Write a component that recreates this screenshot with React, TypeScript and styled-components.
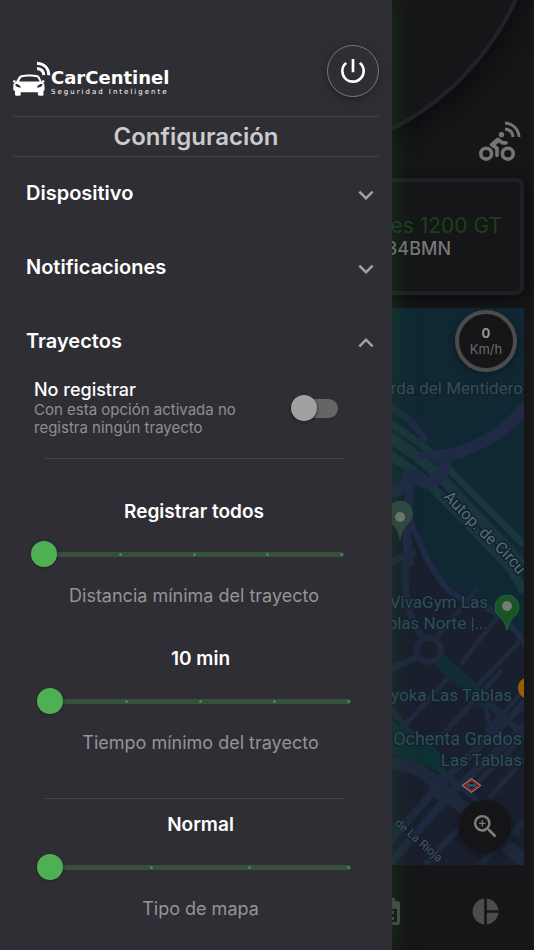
import React, { useState } from "react";
import styled, { createGlobalStyle } from "styled-components";
import { MdExpandLess, MdExpandMore, MdPieChart, MdPowerSettingsNew, MdZoomIn } from "react-icons/md";
import { FaBiking } from "react-icons/fa";

const GlobalStyle = createGlobalStyle`
  * { box-sizing: border-box; }
  body { margin: 0; background: #161618; font-family: Inter, Roboto, sans-serif; }
  button { font: inherit; color: inherit; background: none; border: 0; padding: 0; cursor: pointer; }
  h1, h2, h3, p { margin: 0; }
`;

const Shell = styled.div`
  position: relative;
  min-height: 100vh;
  overflow: hidden;
  background: #161618;
`;

/* ---------- dashboard behind the drawer ---------- */

const Dashboard = styled.main`
  display: flex;
  flex-direction: column;
  min-height: 100vh;
`;

const GaugeArea = styled.header`
  position: relative;
  height: 178px;
  overflow: hidden;
`;

const Gauge = styled.div`
  position: absolute;
  left: 50%;
  bottom: 17px;
  width: 552px;
  height: 552px;
  transform: translateX(-50%);
  border: 4px solid #212127;
  border-radius: 50%;
  box-shadow: 4px 6px 24px #0c0c0e;
`;

const Tracker = styled.div`
  position: absolute;
  right: 12px;
  bottom: 17px;
  display: flex;
  color: #757575;
`;

const VehicleCard = styled.section`
  display: flex;
  flex-direction: column;
  justify-content: center;
  align-items: flex-end;
  height: 117px;
  margin: 0 10px 13px;
  padding-right: 18px;
  border: 4px solid #202024;
  border-radius: 8px;
  box-shadow: 2px 4px 16px #0c0c0e;
`;

const VehicleName = styled.h2`
  font-size: 21px;
  line-height: 24px;
  font-weight: 400;
  color: #19411c;
`;

const Plate = styled.p`
  padding-right: 51px;
  font-size: 18px;
  line-height: 22px;
  font-weight: 500;
  color: #777777;
`;

const MapPanel = styled.section`
  position: relative;
  height: 557px;
  margin: 0 10px;
  overflow: hidden;
  background: #102934;
`;

const MapDrawing = styled.svg`
  display: block;
  width: 100%;
  height: 100%;
`;

const Speed = styled.div`
  position: absolute;
  top: 2px;
  right: 7px;
  width: 62px;
  height: 62px;
  display: flex;
  flex-direction: column;
  align-items: center;
  justify-content: center;
  border: 4px solid #4c4c4c;
  border-radius: 50%;
  background: #161618;
  color: #6a6a6a;
  font-size: 13px;
  line-height: 16px;
  box-shadow: 0 2px 10px #0b1a22;

  strong { color: #999999; font-weight: 700; }
`;

const ZoomButton = styled.button`
  position: absolute;
  right: 13px;
  bottom: 13px;
  width: 52px;
  height: 52px;
  display: grid;
  place-items: center;
  border-radius: 50%;
  background: #151517;
  color: #7c7c7c;
  box-shadow: 0 2px 8px #10121a;
`;

const BottomNav = styled.nav`
  flex: 1;
  display: flex;
  justify-content: flex-end;
  align-items: center;
  gap: 67px;
  min-height: 85px;
  padding: 8px 33px 0;
  color: #4c4c4c;
`;

const NavButton = styled.button`
  display: flex;
`;

/* ---------- drawer ---------- */

const Drawer = styled.aside`
  position: absolute;
  inset: 0 auto 0 0;
  width: min(392px, 85%);
  padding: 45px 13px 0;
  overflow: hidden auto;
  scrollbar-width: none;
  background: #2f2e34;
  color: #ffffff;
  box-shadow: 0 0 24px rgba(32, 80, 32, 0.45);
`;

const DrawerHeader = styled.header`
  display: flex;
  justify-content: space-between;
  align-items: center;
  margin-bottom: 19px;
`;

const Brand = styled.div`
  display: flex;
  align-items: flex-end;
  padding-top: 15px;
`;

const BrandText = styled.div`
  display: flex;
  flex-direction: column;
  white-space: nowrap;
  font-family: "DejaVu Sans", sans-serif;
  font-size: 18px;
  line-height: 18px;
  font-weight: 700;
`;

const Tagline = styled.small`
  font-size: 7px;
  line-height: 10px;
  font-weight: 400;
  letter-spacing: 2px;
`;

const PowerButton = styled.button`
  flex: none;
  width: 52px;
  height: 52px;
  display: grid;
  place-items: center;
  border: 1px solid #77777a;
  border-radius: 50%;
  box-shadow: 0 2px 8px #202024;
`;

const DrawerTitle = styled.h1`
  border: solid #46464b;
  border-width: 1px 0;
  font-size: 24px;
  line-height: 39px;
  font-weight: 600;
  text-align: center;
  color: #cbcbcb;
`;

const Sections = styled.div`
  margin-top: -1px;
`;

const SectionButton = styled.button`
  display: flex;
  justify-content: space-between;
  align-items: center;
  width: 100%;
  height: 74px;
  padding: 0 0 0 13px;
  font-size: 20px;
  font-weight: 600;

  svg { color: #a2a2a4; margin: 3px -2px 0 0; }
`;

const SwitchRow = styled.label`
  display: flex;
  align-items: center;
  justify-content: space-between;
  padding: 1px 41px 0 21px;
`;

const SwitchText = styled.span`
  display: block;
  max-width: 224px;
  font-size: 15px;
  line-height: 18px;
  color: #8f8f92;
`;

const SwitchTitle = styled.span`
  display: block;
  font-size: 18px;
  line-height: 22px;
  font-weight: 500;
  color: #ffffff;
`;

const Switch = styled.input`
  appearance: none;
  display: flex;
  align-items: center;
  width: 43px;
  height: 19px;
  margin: 0;
  border-radius: 10px;
  background: #656567;
  cursor: pointer;

  &::before {
    content: "";
    width: 26px;
    height: 26px;
    margin-left: -4px;
    border-radius: 50%;
    background: #a0a0a0;
    box-shadow: 0 1px 3px #1c1c20;
  }
  &:checked { background: #37593b; justify-content: flex-end; }
  &:checked::before { background: #4caf50; }
`;

const Divider = styled.hr<{ $top: number; $bottom: number }>`
  height: 1px;
  border: 0;
  background: #46464b;
  margin: ${(p) => p.$top}px 36px ${(p) => p.$bottom}px 32px;
`;

const SliderBlock = styled.section<{ $shifted?: boolean }>`
  padding: ${(p) => (p.$shifted ? "0 28px 0 24px" : "0 35px 0 18px")};
  text-align: center;
`;

const SliderValue = styled.output`
  display: block;
  padding-left: 13px;
  font-size: 19px;
  line-height: 24px;
  font-weight: 600;
`;

const SliderLabel = styled.label`
  display: block;
  padding-left: 13px;
  font-size: 18px;
  line-height: 24px;
  color: #949496;
`;

const SliderControl = styled.div`
  display: grid;
  align-items: center;
  height: 60px;

  > * { grid-area: 1 / 1; }
`;

const Track = styled.div`
  display: flex;
  justify-content: space-between;
  align-items: center;
  height: 5px;
  margin-left: 13px;
  padding: 0 1px;
  border-radius: 3px;
  background: #374f3c;
`;

const Tick = styled.i`
  width: 3px;
  height: 3px;
  border-radius: 50%;
  background: #438f48;
`;

const Range = styled.input`
  appearance: none;
  width: 100%;
  height: 26px;
  margin: 0;
  background: none;
  cursor: pointer;

  &::-webkit-slider-thumb {
    appearance: none;
    width: 26px;
    height: 26px;
    border-radius: 50%;
    background: #4eb052;
    box-shadow: 0 1px 3px #222226;
  }
`;

const Spacer = styled.div`
  height: 39px;
`;

type StepSliderProps = { id: string; label: string; values: string[]; shifted?: boolean };

function StepSlider({ id, label, values, shifted }: StepSliderProps) {
  const [step, setStep] = useState(0);
  return (
    <SliderBlock $shifted={shifted}>
      <SliderValue htmlFor={id}>{values[step]}</SliderValue>
      <SliderControl>
        <Track>{values.map((v) => <Tick key={v} />)}</Track>
        <Range id={id} type="range" min={0} max={values.length - 1} value={step}
          onChange={(e) => setStep(Number(e.target.value))} />
      </SliderControl>
      <SliderLabel htmlFor={id}>{label}</SliderLabel>
    </SliderBlock>
  );
}

function CarLogo() {
  return (
    <svg width="38" height="36" viewBox="0 0 38 36" aria-hidden="true">
      <path fill="#fff" fillRule="evenodd" d="M8.5 14.2c4-1.1 12-1.1 16 0 1.300.4 2 1.600 2.600 2.900l1.500 3.300c1.900.8 2.900 2.400 2.900 4.600v3.600c0 .7-.3 1.200-1 1.400v3.600c0 .8-.4 1.200-1.200 1.200h-3.200c-.8 0-1.200-.4-1.200-1.200v-2.400H7.700v2.400c0 .8-.4 1.200-1.200 1.200H3.200c-.8 0-1.200-.4-1.200-1.200V30c-1-.3-1.700-.9-1.700-1.800V25c0-2.200 1-3.800 2.900-4.600l2.100-3.700c.8-1.400 1.900-2.200 3.200-2.500zM6.200 20.500h20.500l-2.300-4.300c-4.300-1-11.700-1-15.600 0-1.200.9-1.900 2.400-2.600 4.300zM2.400 23c0 2 1.500 3.400 5.400 3.600C8 24.700 5.300 22.800 2.400 23zm27 0c-3-.2-5.500 1.700-5.400 3.600 4-.2 5.400-1.600 5.400-3.600zM0 20.500c0-1 .8-1.300 2-1.200l1 1-2 1.200c-.6 0-1-.4-1-1zm31.500 0c0-1-.8-1.300-2-1.200l-1 1 2 1.200c.6 0 1-.4 1-1z" />
      <path fill="none" stroke="#fff" strokeWidth="3" d="M24 2.300c7.500.4 11.600 5.200 11.900 12M24 7.600c4.200.3 6.500 2.800 6.800 6.600" />
    </svg>
  );
}

function BikeTracker() {
  return (
    <svg width="43" height="40" viewBox="0 0 43 40" role="img" aria-label="Moto conectada">
      <FaBiking x="0" y="11" size={36} style={{ height: 29 }} />
      <path fill="none" stroke="#757575" strokeWidth="3" d="M26 2c8 .5 13.500 6 14 14M26 8c5 .5 7.500 3 8 8" />
    </svg>
  );
}

function CalendarIcon() {
  return (
    <svg width="31" height="31" viewBox="0 0 31 31" aria-hidden="true">
      <path fill="currentColor" fillRule="evenodd" d="M6 2h3v3h11V2h3v3h2q3 0 3 3v18q0 3-3 3H5q-3 0-3-3V8q0-3 3-3h1zM5 13v13h20V13zM8 15h14v3H8zM8 21h14v3H8z" />
    </svg>
  );
}

const label = { fontFamily: "Roboto, sans-serif", fontSize: 17, textAnchor: "end" as const,
  fill: "#304e57", stroke: "#14202f", strokeWidth: 3, paintOrder: "stroke" as const };

function CityMap() {
  return (
    <MapDrawing viewBox="10 308 514 557" preserveAspectRatio="xMaxYMin slice" role="img" aria-label="Mapa">
      <path fill="#102833" d="M10 308h514v557H10z" />
      {/* city blocks */}
      <path fill="#1a1f2e" d="M380 500l26-4 20 56 21 34 34 15 31 26 12 14v224H380z" />
      {/* motorway lanes */}
      <g fill="none" stroke="#1b353d">
        <path strokeWidth="7" d="M380 417q34 20 62 45l82 83" />
        <path strokeWidth="11" d="M380 431q38 23 66 51l78 83" />
        <path strokeWidth="9" d="M380 449q34 20 56 42l64 66q14 14 24 35" />
      </g>
      <path fill="none" stroke="#172d35" strokeWidth="2" d="M380 424q38 23 66 51l78 83" />
      {/* link roads */}
      <g fill="none" stroke="#202a44" strokeLinecap="round">
        <path strokeWidth="12" d="M528 404q-24 30-56 43-20 10-37 9" />
        <path strokeWidth="7" d="M446 465q-6-14-24-9M386 405q27 14 38 34" />
        <path strokeWidth="12" d="M446 459q-1 22-20 24-10-4-18-8" />
        <path strokeWidth="13" d="M386 494q18-5 27-18" />
        <path strokeWidth="9" d="M410 480q0 20-4 40l3 42" />
        <path strokeWidth="6" d="M410 520l16 37q15 27 25 35 17 12 32 14 30 15 43 40" />
      </g>
      <g fill="none" stroke="#1f293e">
        <path strokeWidth="7" d="M384 565l32-13M406 555q-4 40 8 68l12 21M384 672l38-17M436 652l92 88" />
        <path strokeWidth="5" d="M434 640l44-52M461 664l42-54M475 688l46-48M404 726l46-50M438 740l64-70M384 700l20 25 26 28M440 770l80 65" />
        <path strokeWidth="5" d="M528 686l-42 46M528 732l-56 56M486 704q0 20 12 38M528 755l-40 44" />
        <path strokeWidth="13" d="M384 763q32-2 53 22l32 28 60 52" />
        <path strokeWidth="8" d="M528 700l-86 82-92 104M540 712l-92 84-70 82" />
        <path strokeWidth="6" d="M425 865l50-54M480 865l44-44" />
        <circle cx="429" cy="650" r="12" strokeWidth="6" />
        <circle cx="443" cy="787" r="11" strokeWidth="6" />
      </g>
      <circle cx="429" cy="650" r="9" fill="#1a1f2e" />
      {/* parks */}
      <path fill="#102c36" d="M443 654l49 43-9 12-48-44z" />
      <path fill="#0f3032" d="M380 710q29 25 50 31l19 25-9 8q-22-16-60-22z" />
      <path fill="#0f3032" d="M380 817l18 8-6 15-12 8z" />

      <text x="523" y="394" {...label}>rda del Mentidero</text>
      <path id="motorway" fill="none" d="M443 497q35 38 60 60l36 42" />
      <text {...label} textAnchor="start" fontSize={16} fill="#52706f"><textPath href="#motorway">Autop. de Circu</textPath></text>
      <text x="488" y="608" {...label}>VivaGym Las</text>
      <text x="488" y="629" {...label}>blas Norte |...</text>
      <text x="512" y="701" {...label}>yoka Las Tablas</text>
      <text x="522" y="745" {...label} fontSize={18}>Ochenta Grados</text>
      <text x="522" y="766" {...label}>Las Tablas</text>
      <text transform="translate(394 824) rotate(41)" {...label} textAnchor="start" fontSize={12} fill="#455062">de La Rioja</text>

      {/* place markers */}
      <path fill="#314943" d="M400 541q-2-12-8-17a13 13 0 1 1 16 0q-6 5-8 17z" />
      <circle cx="400" cy="517" r="5" fill="#777b75" />
      <path fill="#185426" stroke="#1d6930" d="M507 630q-2-10-9-15a12 12 0 1 1 18 0q-7 5-9 15z" />
      <circle cx="507" cy="606" r="5" fill="#747c76" />
      <circle cx="529" cy="688" r="11" fill="#965e08" />
      <path fill="#8b8989" d="M471.500 778l10 7.500-10 7.500-10-7.500z" />
      <path fill="#171f2c" stroke="#8d2423" strokeWidth="2" d="M471.500 780.500l7 5-7 5-7-5z" />
      <path fill="#18556a" d="M467 784h9v3h-9z" />
    </MapDrawing>
  );
}

export default function App() {
  const [open, setOpen] = useState("Trayectos");
  return (
    <Shell>
      <GlobalStyle />
      <Dashboard>
        <GaugeArea>
          <Gauge />
          <Tracker><BikeTracker /></Tracker>
        </GaugeArea>
        <VehicleCard>
          <VehicleName>es 1200 GT</VehicleName>
          <Plate>34BMN</Plate>
        </VehicleCard>
        <MapPanel>
          <CityMap />
          <Speed><strong>0</strong>Km/h</Speed>
          <ZoomButton aria-label="Ampliar"><MdZoomIn size={31} /></ZoomButton>
        </MapPanel>
        <BottomNav>
          <NavButton aria-label="Historial"><CalendarIcon /></NavButton>
          <NavButton aria-label="Estadísticas"><MdPieChart size={31} /></NavButton>
        </BottomNav>
      </Dashboard>

      <Drawer>
        <DrawerHeader>
          <Brand>
            <CarLogo />
            <BrandText>CarCentinel<Tagline>Seguridad Inteligente</Tagline></BrandText>
          </Brand>
          <PowerButton aria-label="Cerrar sesión"><MdPowerSettingsNew size={32} /></PowerButton>
        </DrawerHeader>
        <DrawerTitle>Configuración</DrawerTitle>
        <Sections>
          {["Dispositivo", "Notificaciones", "Trayectos"].map((name) => (
            <SectionButton key={name} aria-expanded={open === name} onClick={() => setOpen(open === name ? "" : name)}>
              {name}
              {open === name ? <MdExpandLess size={30} /> : <MdExpandMore size={30} />}
            </SectionButton>
          ))}
        </Sections>
        {open === "Trayectos" && (
          <>
            <SwitchRow>
              <SwitchText>
                <SwitchTitle>No registrar</SwitchTitle>
                Con esta opción activada no registra ningún trayecto
              </SwitchText>
              <Switch type="checkbox" role="switch" />
            </SwitchRow>
            <Divider $top={21} $bottom={41} />
            <StepSlider id="distance" label="Distancia mínima del trayecto"
              values={["Registrar todos", "1 km", "2 km", "5 km", "10 km"]} />
            <Spacer />
            <StepSlider shifted id="time" label="Tiempo mínimo del trayecto"
              values={["10 min", "20 min", "30 min", "45 min", "60 min"]} />
            <Divider $top={43} $bottom={14} />
            <StepSlider shifted id="map-type" label="Tipo de mapa"
              values={["Normal", "Satélite", "Híbrido", "Relieve"]} />
          </>
        )}
      </Drawer>
    </Shell>
  );
}
